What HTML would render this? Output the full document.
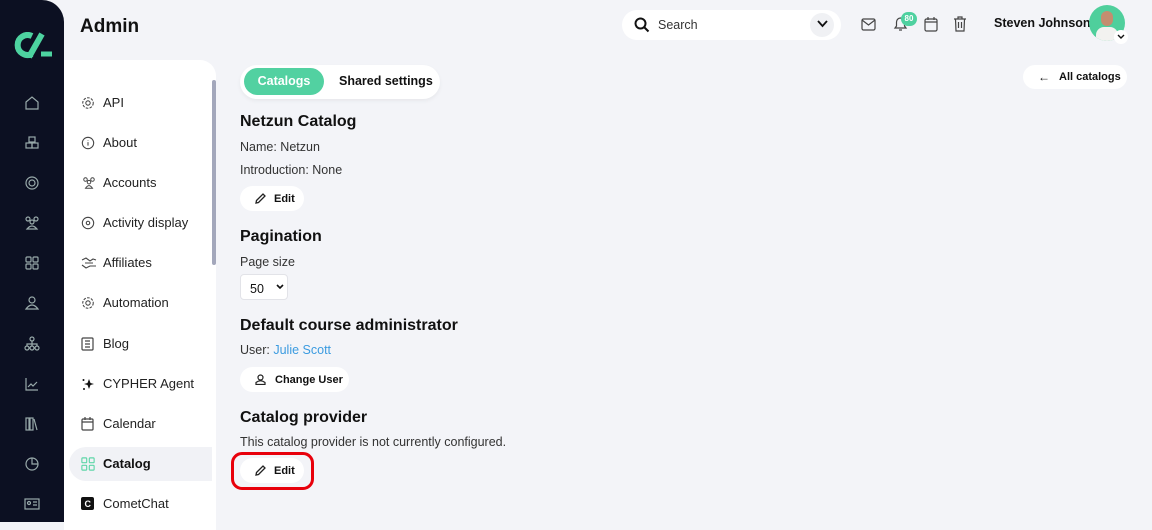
<!DOCTYPE html>
<html><head><style>
*{box-sizing:border-box;margin:0;padding:0}
body{width:1152px;height:522px;overflow:hidden;background:#f3f4f8;font-family:"Liberation Sans",sans-serif;color:#111;position:relative}
.side{position:absolute;left:0;top:0;width:64px;height:522px;background:#0c1022;border-top-right-radius:22px}
.side svg{position:absolute;left:24px}
.panel{position:absolute;left:64px;top:60px;width:152px;height:470px;background:#fff;border-top-right-radius:16px}
.scroll{position:absolute;left:212px;top:80px;width:4px;height:185px;background:#a3a7bb;border-radius:2px}
.nav{position:absolute;left:103px;font-size:13px;color:#222}
.nico{position:absolute;left:81px}
.abs{position:absolute}
h1{position:absolute;left:80px;top:16px;font-size:19px;font-weight:bold}
.h{position:absolute;left:240px;font-size:16px;font-weight:bold}
.t{position:absolute;left:240px;font-size:12.5px;color:#333}
.btn{position:absolute;background:#fff;border-radius:14px;height:25px;font-size:11px;font-weight:bold;display:flex;align-items:center;gap:8px;padding-left:15px}
</style></head><body>
<div class="side">
<svg style="left:12px;top:32px" width="42" height="28" viewBox="0 0 42 28"><path d="M20 4 A10 10 0 1 0 20 22" stroke="#4dd3a0" stroke-width="6" fill="none"/><path d="M30 2 L17 25" stroke="#4dd3a0" stroke-width="6"/><path d="M29 22 H40" stroke="#4dd3a0" stroke-width="5"/></svg>
<svg style="top:95px" width="16" height="16" viewBox="0 0 16 16" fill="none" stroke="#9aa" stroke-width="1.2"><path d="M2 7 L8 2 L14 7 V14 H2 Z"/></svg>
<svg style="top:135px" width="16" height="16" viewBox="0 0 16 16" fill="none" stroke="#9aa" stroke-width="1.2"><rect x="5" y="2" width="6" height="5"/><rect x="2" y="8" width="6" height="5"/><rect x="8" y="8" width="6" height="5"/></svg>
<svg style="top:175px" width="16" height="16" viewBox="0 0 16 16" fill="none" stroke="#9aa" stroke-width="1.2"><circle cx="8" cy="8" r="6"/><circle cx="8" cy="8" r="3"/></svg>
<svg style="top:215px" width="16" height="16" viewBox="0 0 16 16" fill="none" stroke="#9aa" stroke-width="1.2"><circle cx="4" cy="4" r="2"/><circle cx="12" cy="4" r="2"/><circle cx="8" cy="7" r="2"/><path d="M3 14 Q8 8 13 14Z"/></svg>
<svg style="top:255px" width="16" height="16" viewBox="0 0 16 16" fill="none" stroke="#9aa" stroke-width="1.2"><rect x="2" y="2" width="5" height="5" rx="1"/><rect x="9" y="2" width="5" height="5" rx="1"/><rect x="2" y="9" width="5" height="5" rx="1"/><rect x="9" y="9" width="5" height="5" rx="1"/></svg>
<svg style="top:295px" width="16" height="16" viewBox="0 0 16 16" fill="none" stroke="#9aa" stroke-width="1.2"><circle cx="8" cy="5" r="3"/><path d="M2 14 Q8 6 14 14Z"/></svg>
<svg style="top:336px" width="16" height="16" viewBox="0 0 16 16" fill="none" stroke="#9aa" stroke-width="1.2"><circle cx="8" cy="3" r="2"/><circle cx="3" cy="12" r="2"/><circle cx="8" cy="12" r="2"/><circle cx="13" cy="12" r="2"/><path d="M8 5V10M3 10V8H13V10"/></svg>
<svg style="top:376px" width="16" height="16" viewBox="0 0 16 16" fill="none" stroke="#9aa" stroke-width="1.2"><path d="M2 2V14H14M4 11L7 8L9 10L13 6"/></svg>
<svg style="top:416px" width="16" height="16" viewBox="0 0 16 16" fill="none" stroke="#9aa" stroke-width="1.2"><rect x="2" y="2" width="3" height="12"/><rect x="6" y="2" width="3" height="12"/><path d="M10 3L13 14"/></svg>
<svg style="top:456px" width="16" height="16" viewBox="0 0 16 16" fill="none" stroke="#9aa" stroke-width="1.2"><circle cx="8" cy="8" r="6"/><path d="M8 2V8H14"/></svg>
<svg style="top:496px" width="16" height="16" viewBox="0 0 16 16" fill="none" stroke="#9aa" stroke-width="1.2"><rect x="1" y="3" width="14" height="10"/><circle cx="5" cy="7" r="1.5"/><path d="M9 6H13M9 9H13"/></svg>
</div>
<h1>Admin</h1>
<div class="panel"></div>
<div class="scroll"></div>
<div class="abs" style="left:69px;top:447px;width:143px;height:34px;background:#f1f2f6;border-radius:17px 0 0 17px"></div>
<div class="nav" style="top:95px">API</div>
<div class="nav" style="top:135px">About</div>
<div class="nav" style="top:175px">Accounts</div>
<div class="nav" style="top:215px">Activity display</div>
<div class="nav" style="top:255px">Affiliates</div>
<div class="nav" style="top:295px">Automation</div>
<div class="nav" style="top:336px">Blog</div>
<div class="nav" style="top:376px">CYPHER Agent</div>
<div class="nav" style="top:416px">Calendar</div>
<div class="nav" style="top:456px;font-weight:bold;color:#111">Catalog</div>
<div class="nav" style="top:496px">CometChat</div>
<svg class="nico" style="top:96px" width="14" height="14" viewBox="0 0 16 16" fill="none" stroke="#444" stroke-width="1.2"><circle cx="8" cy="8" r="2.5"/><circle cx="8" cy="8" r="6" stroke-dasharray="3 1.5"/></svg>
<svg class="nico" style="top:136px" width="14" height="14" viewBox="0 0 16 16" fill="none" stroke="#444" stroke-width="1.2"><circle cx="8" cy="8" r="6.5"/><path d="M8 7V11M8 5V5.5"/></svg>
<svg class="nico" style="top:176px" width="16" height="14" viewBox="0 0 16 16" fill="none" stroke="#444" stroke-width="1.1"><circle cx="4" cy="4" r="2"/><circle cx="12" cy="4" r="2"/><circle cx="8" cy="7" r="2"/><path d="M4 14Q8 8 12 14Z"/></svg>
<svg class="nico" style="top:216px" width="14" height="14" viewBox="0 0 16 16" fill="none" stroke="#444" stroke-width="1.2"><circle cx="8" cy="8" r="6.5"/><circle cx="8" cy="8" r="2"/></svg>
<svg class="nico" style="top:257px" width="16" height="12" viewBox="0 0 16 12" fill="none" stroke="#444" stroke-width="1.1"><path d="M1 3L5 1L9 4L12 2L15 3M1 8L5 11L9 9L15 9M4 6H12"/></svg>
<svg class="nico" style="top:296px" width="14" height="14" viewBox="0 0 16 16" fill="none" stroke="#444" stroke-width="1.2"><circle cx="8" cy="8" r="2.5"/><circle cx="8" cy="8" r="6" stroke-dasharray="3 1.5"/></svg>
<svg class="nico" style="top:337px" width="13" height="14" viewBox="0 0 13 14" fill="none" stroke="#444" stroke-width="1.2"><rect x="1" y="1" width="11" height="12" rx="1"/><path d="M4 4H9M4 7H9M4 10H9"/></svg>
<svg class="nico" style="top:377px" width="14" height="14" viewBox="0 0 14 14" fill="#111"><path d="M8 2L9.5 6L13 7L9.5 8L8 12L6.5 8L3 7L6.5 6Z"/><circle cx="2.5" cy="3" r="1"/><circle cx="3" cy="12" r="1"/></svg>
<svg class="nico" style="top:417px" width="13" height="14" viewBox="0 0 13 14" fill="none" stroke="#444" stroke-width="1.2"><rect x="1" y="2" width="11" height="11" rx="1"/><path d="M1 5H12M4 0V3M9 0V3"/></svg>
<svg class="nico" style="top:457px" width="14" height="14" viewBox="0 0 16 16" fill="none" stroke="#5fd6a8" stroke-width="1.3"><rect x="1" y="1" width="5.5" height="5.5" rx="1"/><rect x="9.5" y="1" width="5.5" height="5.5" rx="1"/><rect x="1" y="9.5" width="5.5" height="5.5" rx="1"/><rect x="9.5" y="9.5" width="5.5" height="5.5" rx="1"/></svg>
<svg class="nico" style="top:497px" width="13" height="13" viewBox="0 0 13 13"><rect width="13" height="13" rx="2" fill="#111"/><text x="3.5" y="10" font-size="9" fill="#fff" font-family="Liberation Sans" font-weight="bold">C</text></svg>

<!-- top bar -->
<div class="abs" style="left:622px;top:10px;width:219px;height:30px;background:#fff;border-radius:15px"></div>
<svg class="abs" style="left:634px;top:17px" width="16" height="16" viewBox="0 0 16 16" fill="none" stroke="#111" stroke-width="2"><circle cx="6.5" cy="6.5" r="5"/><path d="M10 10L14.5 14.5"/></svg>
<div class="abs" style="left:658px;top:18px;font-size:12.5px;color:#333">Search</div>
<div class="abs" style="left:810px;top:13px;width:24px;height:24px;border-radius:12px;background:#f0f1f4"></div>
<svg class="abs" style="left:817px;top:20px" width="11" height="8" viewBox="0 0 11 8" fill="none" stroke="#111" stroke-width="1.8"><path d="M1 1L5.5 6L10 1"/></svg>
<svg class="abs" style="left:861px;top:18px" width="15" height="13" viewBox="0 0 15 13" fill="none" stroke="#444" stroke-width="1.2"><rect x="1" y="1" width="13" height="11" rx="1.5"/><path d="M1 2L7.5 7L14 2"/></svg>
<svg class="abs" style="left:893px;top:16px" width="15" height="16" viewBox="0 0 15 16" fill="none" stroke="#444" stroke-width="1.2"><path d="M2 12H13L11.5 10V6A4 4 0 0 0 3.5 6V10Z M6 14H9"/></svg>
<div class="abs" style="left:901px;top:12px;width:16px;height:14px;border-radius:8px;background:#4fd1a0;color:#fff;font-size:8px;text-align:center;line-height:14px;font-weight:bold">80</div>
<svg class="abs" style="left:924px;top:16px" width="14" height="16" viewBox="0 0 14 16" fill="none" stroke="#444" stroke-width="1.2"><rect x="1" y="3" width="12" height="12" rx="1.5"/><path d="M1 6H13M4 1V4M10 1V4"/></svg>
<svg class="abs" style="left:953px;top:16px" width="14" height="16" viewBox="0 0 14 16" fill="none" stroke="#444" stroke-width="1.2"><path d="M1 3H13M5 3V1H9V3M2.5 3L3 15H11L11.5 3M5.5 6V12M8.5 6V12"/></svg>
<div class="abs" style="left:994px;top:16px;font-size:12.5px;font-weight:bold">Steven Johnson</div>
<div class="abs" style="left:1089px;top:5px;width:36px;height:36px;border-radius:18px;background:#4fcf9c;overflow:hidden"><div style="position:absolute;left:12px;top:6px;width:12px;height:15px;border-radius:6px;background:#c48d6f"></div><div style="position:absolute;left:7px;top:22px;width:22px;height:16px;border-radius:8px 8px 0 0;background:#f2f2f0"></div></div>
<div class="abs" style="left:1114px;top:30px;width:14px;height:14px;border-radius:7px;background:#fff"></div>
<svg class="abs" style="left:1117px;top:34px" width="8" height="6" viewBox="0 0 8 6" fill="none" stroke="#111" stroke-width="1.4"><path d="M1 1L4 4L7 1"/></svg>

<div class="btn" style="left:1023px;top:65px;width:104px;height:24px;border-radius:12px;gap:9px"><span style="font-size:12px">←</span>All catalogs</div>

<!-- tabs -->
<div class="abs" style="left:240px;top:65px;width:200px;height:34px;background:#fff;border-radius:17px;box-shadow:0 2px 4px rgba(0,0,0,.05)"></div>
<div class="abs" style="left:244px;top:68px;width:80px;height:27px;background:#52d1a1;border-radius:14px;color:#fff;font-size:12.5px;font-weight:bold;text-align:center;line-height:27px">Catalogs</div>
<div class="abs" style="left:339px;top:74px;font-size:12.5px;font-weight:bold">Shared settings</div>

<div class="h" style="top:113px">Netzun Catalog</div>
<div class="t" style="top:140px">Name: Netzun</div>
<div class="t" style="top:163px">Introduction: None</div>
<div class="btn" style="left:240px;top:186px;width:64px"><svg width="11" height="11" viewBox="0 0 11 11" fill="none" stroke="#222" stroke-width="1.3"><path d="M1 10L1.5 7.5L8 1L10 3L3.5 9.5Z"/></svg>Edit</div>
<div class="h" style="top:228px">Pagination</div>
<div class="t" style="top:255px">Page size</div>
<div class="abs" style="left:240px;top:274px;width:48px;height:26px;background:#fff;border:1px solid #e2e3e8;border-radius:4px;font-size:12.5px;padding:7px 0 0 9px">50</div>
<svg class="abs" style="left:276px;top:284px" width="8" height="6" viewBox="0 0 8 6" fill="none" stroke="#111" stroke-width="1.6"><path d="M1 1L4 4L7 1"/></svg>
<div class="h" style="top:317px">Default course administrator</div>
<div class="t" style="top:343px">User: <span style="color:#3b9be0">Julie Scott</span></div>
<div class="btn" style="left:240px;top:367px;width:109px;gap:9px"><svg width="11" height="11" viewBox="0 0 11 11" fill="none" stroke="#222" stroke-width="1.2"><circle cx="5.5" cy="3.5" r="2.5"/><path d="M1 10.5V8.5Q5.5 5 10 8.5V10.5Z"/></svg>Change User</div>
<div class="h" style="top:409px">Catalog provider</div>
<div class="t" style="top:435px">This catalog provider is not currently configured.</div>
<div class="btn" style="left:240px;top:458px;width:64px"><svg width="11" height="11" viewBox="0 0 11 11" fill="none" stroke="#222" stroke-width="1.3"><path d="M1 10L1.5 7.5L8 1L10 3L3.5 9.5Z"/></svg>Edit</div>
<div class="abs" style="left:231px;top:452px;width:83px;height:38px;border:3.5px solid #e8000b;border-radius:11px"></div>
</body></html>
